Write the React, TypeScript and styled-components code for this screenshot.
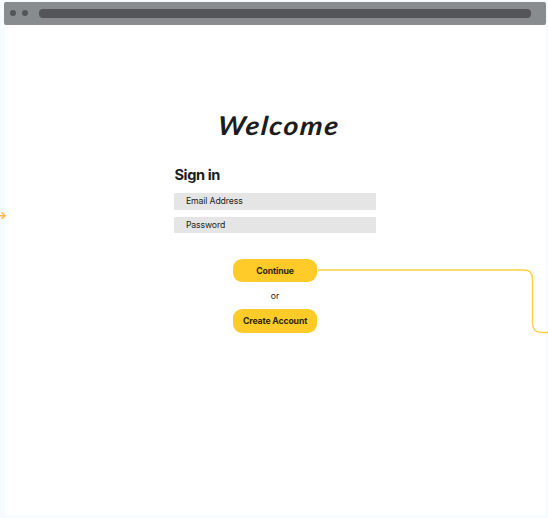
import React from "react";
import styled, { createGlobalStyle } from "styled-components";

const GlobalStyle = createGlobalStyle`
  * { box-sizing: border-box; }
  html, body { margin: 0; background: #f5fbff; overflow: hidden; }
  body { font-family: Inter, "Liberation Sans", sans-serif; color: #1c1c1c; }
`;

const Canvas = styled.main`
  position: relative;
  width: 548px;
  height: 518px;
  padding: 2px 2px 3px 4px;
  overflow: hidden;
`;

const BrowserWindow = styled.section`
  height: 513px;
  display: flex;
  flex-direction: column;
`;

const TitleBar = styled.header`
  height: 23px;
  flex: none;
  display: flex;
  align-items: center;
  padding: 0 15px 0 6px;
  background: #898c8e;
  border-radius: 2px;
`;

const Dot = styled.span`
  width: 6px;
  height: 6px;
  margin: -2px 5.5px 0 0;
  border-radius: 50%;
  background: #535659;
`;

const AddressBar = styled.div`
  flex: 1;
  height: 8.5px;
  margin-left: 6px;
  border-radius: 4px;
  background: #535557;
`;

const Page = styled.div`
  flex: 1;
  margin: 0 0 0 1px;
  background: #fff;
  padding: 83px 170px 0 169.4px;
  display: flex;
  flex-direction: column;
`;

const Wordmark = styled.h1`
  margin: 0 0 0 43px;
  height: 42px;
  font: italic 700 26px/35px Lato, "Open Sans", sans-serif;
  letter-spacing: 1.4px;
  white-space: nowrap;
  transform: skewX(-6deg) scaleX(1.1);
  transform-origin: 0 28px;
`;

const SignInForm = styled.form`
  display: flex;
  flex-direction: column;
`;

const Heading = styled.h2`
  margin: 16px 0 8px;
  font-size: 14.6px;
  line-height: 19px;
  font-weight: 700;
  letter-spacing: -0.38px;
`;

const Field = styled.div`
  height: 16.6px;
  margin-bottom: 7.2px;
  padding-left: 11.5px;
  border-radius: 1px;
  background: #e5e5e5;
  font-size: 8.7px;
  line-height: 17px;
  letter-spacing: -0.12px;
`;

const Actions = styled.div`
  width: 84px;
  margin: 18px 0 0 58.7px;
  display: flex;
  flex-direction: column;
  align-items: center;
`;

const Button = styled.button`
  width: 84px;
  height: 23.6px;
  padding: 0;
  border: 0;
  border-radius: 9px;
  background: #ffcb29;
  color: #2b250f;
  font: 700 8.7px/24px Inter, sans-serif;
  letter-spacing: -0.14px;
  white-space: nowrap;
`;

const Separator = styled.span`
  height: 27px;
  font-size: 8.7px;
  line-height: 28px;
`;

/* Flow arrows drawn above the wireframe window. */
const Connectors = styled.svg`
  position: absolute;
  inset: 0;
  pointer-events: none;
`;

export default function App() {
  return (
    <>
      <GlobalStyle />
      <Canvas>
        <BrowserWindow>
          <TitleBar>
            <Dot />
            <Dot />
            <AddressBar />
          </TitleBar>
          <Page>
            <Wordmark>Welcome</Wordmark>
            <SignInForm>
              <Heading>Sign in</Heading>
              <Field>Email Address</Field>
              <Field>Password</Field>
              <Actions>
                <Button type="button">Continue</Button>
                <Separator>or</Separator>
                <Button type="button">Create Account</Button>
              </Actions>
            </SignInForm>
          </Page>
        </BrowserWindow>
        <Connectors width="548" height="518" fill="none">
          <path d="M318 270H524Q532.5 270 532.5 279V323Q532.5 332.5 542 332.5H548" stroke="#ffcf3b" strokeWidth="1.3" />
          <path d="M0 215.8H5M1.5 212.5L5 215.8L1.5 219" stroke="#ffb653" strokeWidth="1.5" />
        </Connectors>
      </Canvas>
    </>
  );
}
